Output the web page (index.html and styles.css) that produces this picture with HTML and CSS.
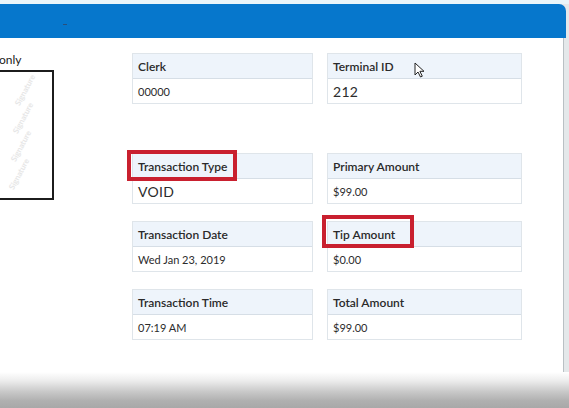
FILE: index.html
```html
<!DOCTYPE html>
<html>
<head>
<meta charset="utf-8">
<link rel="stylesheet" href="styles.css">
</head>
<body>
<div class="screen">
  <div class="top-strip"></div>
  <div class="window">
    <div class="titlebar"><span class="title-mark"></span></div>
    <div class="content">
      <div class="left-pane">
        <div class="sig-caption">only</div>
        <div class="sig-box">
          <span class="wm w1">Signature</span>
          <span class="wm w2">Signature</span>
          <span class="wm w3">Signature</span>
          <span class="wm w4">Signature</span>
        </div>
      </div>
      <div class="cards">
        <div class="card gap-below">
          <div class="card-head">Clerk</div>
          <div class="card-val">00000</div>
        </div>
        <div class="card gap-below">
          <div class="card-head">Terminal ID</div>
          <div class="card-val big">212</div>
          <svg class="cursor" width="12" height="16" viewBox="0 0 12 16"><path d="M1 1 L1 13 L4 10 L6.5 15 L8.3 14.2 L5.9 9.3 L10 9.3 Z" fill="#fff" stroke="#222" stroke-width="1" stroke-linejoin="round"/></svg>
        </div>
        <div class="card">
          <div class="card-head">Transaction Type</div>
          <div class="card-val big">VOID</div>
          <div class="mark mark-type"></div>
        </div>
        <div class="card">
          <div class="card-head">Primary Amount</div>
          <div class="card-val">$99.00</div>
        </div>
        <div class="card">
          <div class="card-head">Transaction Date</div>
          <div class="card-val">Wed Jan 23, 2019</div>
        </div>
        <div class="card">
          <div class="card-head">Tip Amount</div>
          <div class="card-val">$0.00</div>
          <div class="mark mark-tip"></div>
        </div>
        <div class="card">
          <div class="card-head">Transaction Time</div>
          <div class="card-val">07:19 AM</div>
        </div>
        <div class="card">
          <div class="card-head">Total Amount</div>
          <div class="card-val">$99.00</div>
        </div>
      </div>
    </div>
  </div>
  <div class="bottom-shade"></div>
</div>
</body>
</html>
```
FILE: styles.css
```css
html, body {
  margin: 0;
  padding: 0;
}
body {
  width: 569px;
  height: 408px;
  overflow: hidden;
  background: #e4e8ea;
  font-family: Lato, "Liberation Sans", sans-serif;
  color: #2b2b2b;
}
.screen {
  display: flex;
  flex-direction: column;
  height: 408px;
}
.top-strip {
  height: 4px;
  background: #e9f5fa;
}
.window {
  width: 566px;
  flex: 1;
  display: flex;
  flex-direction: column;
}
.titlebar {
  height: 34px;
  background: #0677cc;
  border-top-right-radius: 7px;
  position: relative;
}
.title-mark {
  position: absolute;
  left: 63px;
  top: 20px;
  width: 4px;
  height: 1px;
  background: #2a4f7a;
}
.content {
  flex: 1;
  width: 563px;
  background: #ffffff;
  border-right: 1px solid #b9c0c4;
  display: flex;
  align-items: flex-start;
}
.left-pane {
  width: 132px;
  flex-shrink: 0;
  padding-top: 15px;
}
.sig-caption {
  font-size: 12px;
  line-height: 14px;
  color: #222;
  margin-left: -1px;
}
.sig-box {
  margin-top: 3px;
  width: 52px;
  height: 126px;
  border: 2px solid #1c1c1c;
  border-left: none;
  position: relative;
  overflow: hidden;
  background: #fff;
}
.wm {
  position: absolute;
  font-size: 8px;
  line-height: 8px;
  font-weight: bold;
  color: #e6e6e6;
  transform: rotate(-62deg);
  transform-origin: center;
  white-space: nowrap;
}
.w1 { top: 14px; left: 8px; }
.w2 { top: 42px; left: 6px; }
.w3 { top: 70px; left: 4px; }
.w4 { top: 98px; left: 2px; }
.cards {
  margin-top: 15px;
  display: grid;
  grid-template-columns: 181px 195px;
  column-gap: 14px;
  row-gap: 17px;
}
.card {
  position: relative;
  border: 1px solid #dfe5ea;
  background: #fff;
  height: 49px;
  display: flex;
  flex-direction: column;
}
.gap-below {
  margin-bottom: 32px;
}
.card-head {
  height: 24px;
  background: #eef4fb;
  border-bottom: 1px solid #d6dee6;
  font-size: 12px;
  font-weight: 600;
  color: #2a2a2a;
  line-height: 25px;
  padding-left: 5px;
}
.card-val {
  flex: 1;
  font-size: 11px;
  color: #2c2c2c;
  line-height: 25px;
  padding-left: 5px;
}
.card-val.big {
  font-size: 14px;
  letter-spacing: 0.3px;
}
.mark {
  position: absolute;
  border: 4px solid #c9202f;
  box-sizing: border-box;
}
.mark-type {
  left: -6px;
  top: -4px;
  width: 110px;
  height: 31px;
}
.mark-tip {
  left: -6px;
  top: -7px;
  width: 92px;
  height: 33px;
}
.cursor {
  position: absolute;
  left: 86px;
  top: 8px;
}
.bottom-shade {
  position: absolute;
  left: 0;
  top: 372px;
  width: 569px;
  height: 36px;
  background: linear-gradient(#ffffff, #ececec 25%, #c8c8c8 55%, #b0b0b0 80%, #a8a8a8);
}
```
